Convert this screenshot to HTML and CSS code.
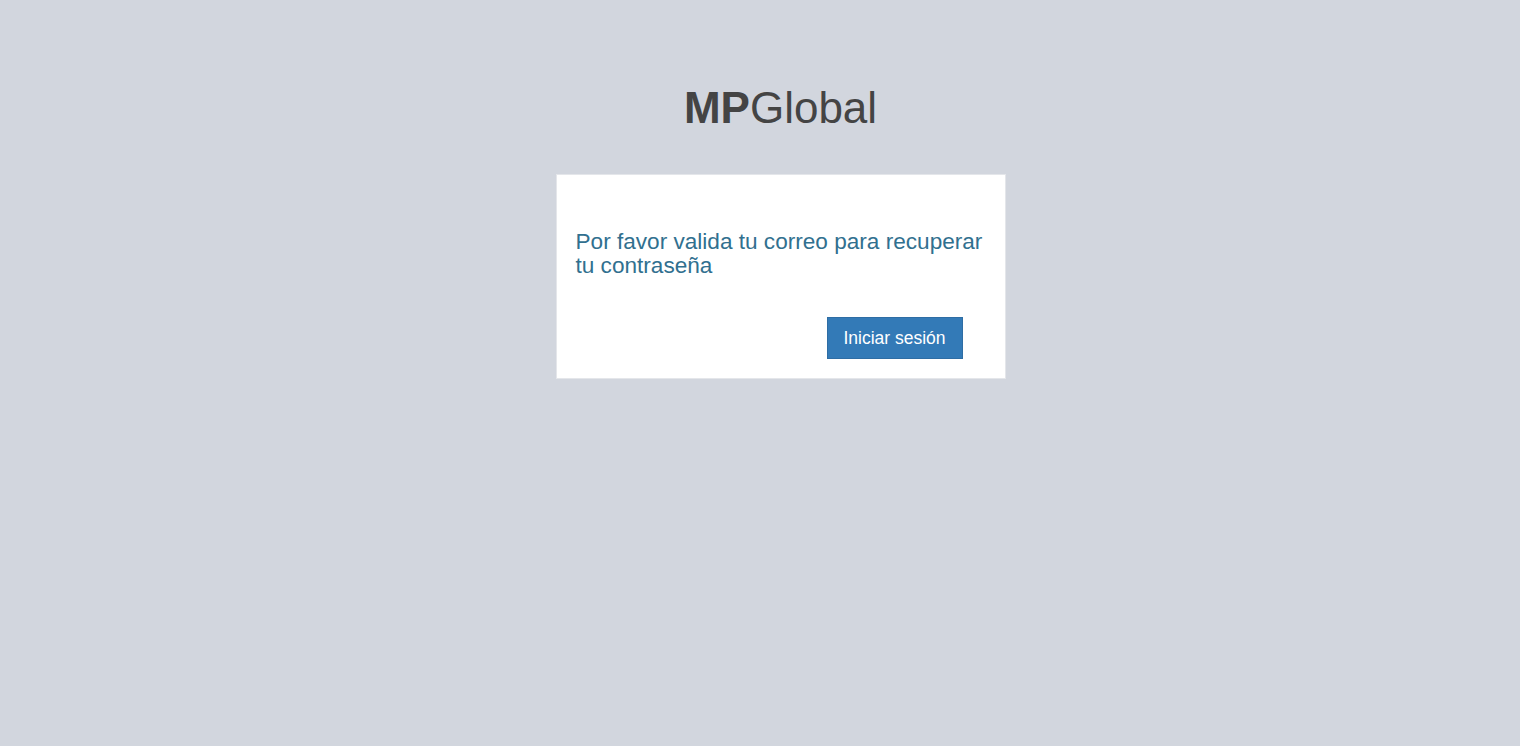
FILE: index.html
```html
<!DOCTYPE html>
<html lang="es">
<head>
<meta charset="utf-8">
<title>MPGlobal</title>
<link rel="stylesheet" href="styles.css">
</head>
<body>
<div class="page">
  <div class="login">
    <div class="logo"><b>MP</b>Global</div>
    <div class="box">
      <h4 class="msg">Por favor valida tu correo para recuperar tu contraseña</h4>
      <div class="actions">
        <button class="btn" type="button">Iniciar sesión</button>
      </div>
    </div>
  </div>
</div>
</body>
</html>
```
FILE: styles.css
```css
html, body {
  margin: 0;
  padding: 0;
  background: #d2d6de;
  font-family: "Liberation Sans", Arial, sans-serif;
}
.page {
  display: flex;
  justify-content: center;
  padding: 82px 0 0 41px;
  min-height: 664px;
}
.login {
  width: 450px;
  display: flex;
  flex-direction: column;
}
.logo {
  font-size: 44px;
  line-height: 51px;
  color: #444;
  text-align: center;
  margin-bottom: 41px;
}
.logo b {
  font-weight: 700;
}
.box {
  background: #fff;
  border: 1px solid #e4e6ea;
  padding: 55px 20px 19px 19px;
  display: flex;
  flex-direction: column;
}
.msg {
  margin: 0;
  font-size: 22.6px;
  line-height: 24px;
  font-weight: 400;
  color: #31708f;
}
.actions {
  display: flex;
  justify-content: flex-end;
  padding-right: 22px;
  margin-top: 39px;
}
.btn {
  font-family: "Liberation Sans", Arial, sans-serif;
  font-size: 17.5px;
  color: #fff;
  background: #337ab7;
  border: 1px solid #2e6da4;
  width: 136px;
  height: 42px;
  padding: 0;
  border-radius: 0;
}
```
